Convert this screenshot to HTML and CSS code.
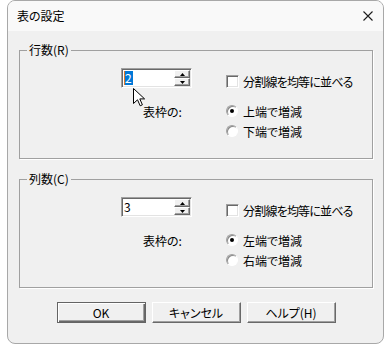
FILE: index.html
```html
<!DOCTYPE html>
<html lang="ja">
<head>
    <meta charset="UTF-8">
    <meta name="viewport" content="width=device-width, initial-scale=1.0">
    <title>表の設定</title>
    <link rel="stylesheet" href="styles.css">
</head>
<body>
    <div class="window">
        <div class="titlebar">
            <span class="title">表の設定</span>
            <svg class="close" width="10" height="10" viewBox="0 0 10 10">
                <path d="M0.5 0.5 L9.5 9.5 M9.5 0.5 L0.5 9.5" stroke="#1c1c1c" stroke-width="1.1" fill="none"/>
            </svg>
        </div>

        <div class="content">
            <!-- 行数 -->
            <fieldset class="group">
                <legend>行数(R)</legend>
                <div class="group-body">
                    <div class="col-left">
                        <div class="spin">
                            <div class="spin-value"><span class="selected">2</span></div>
                            <div class="spin-btns">
                                <div class="spin-btn"><svg width="5" height="3" viewBox="0 0 5 3"><path d="M2.5 0 L5 3 L0 3 Z" fill="#000"/></svg></div>
                                <div class="spin-btn"><svg width="5" height="3" viewBox="0 0 5 3"><path d="M0 0 L5 0 L2.5 3 Z" fill="#000"/></svg></div>
                            </div>
                        </div>
                        <div class="frame-label">表枠の:</div>
                    </div>
                    <div class="col-right">
                        <div class="option"><span class="checkbox"></span><span class="narrow">分割線を均等に並べる</span></div>
                        <div class="option first-radio"><span class="radio checked"></span>上端で増減</div>
                        <div class="option radio-row"><span class="radio"></span>下端で増減</div>
                    </div>
                </div>
            </fieldset>

            <!-- 列数 -->
            <fieldset class="group group-cols">
                <legend>列数(C)</legend>
                <div class="group-body">
                    <div class="col-left">
                        <div class="spin">
                            <div class="spin-value">3</div>
                            <div class="spin-btns">
                                <div class="spin-btn"><svg width="5" height="3" viewBox="0 0 5 3"><path d="M2.5 0 L5 3 L0 3 Z" fill="#000"/></svg></div>
                                <div class="spin-btn"><svg width="5" height="3" viewBox="0 0 5 3"><path d="M0 0 L5 0 L2.5 3 Z" fill="#000"/></svg></div>
                            </div>
                        </div>
                        <div class="frame-label">表枠の:</div>
                    </div>
                    <div class="col-right">
                        <div class="option"><span class="checkbox"></span><span class="narrow">分割線を均等に並べる</span></div>
                        <div class="option first-radio"><span class="radio checked"></span>左端で増減</div>
                        <div class="option radio-row"><span class="radio"></span>右端で増減</div>
                    </div>
                </div>
            </fieldset>

            <div class="buttons">
                <button class="btn default">OK</button>
                <button class="btn">キャンセル</button>
                <button class="btn">ヘルプ(H)</button>
            </div>
        </div>
    </div>

    <!-- mouse pointer -->
    <svg class="pointer" width="13" height="19" viewBox="0 0 13 19">
        <path d="M0.5 0.5 V15.5 L4.5 11.8 L7.2 17.8 L9.4 16.8 L6.8 10.9 H11.6 Z" fill="#fff" stroke="#000" stroke-width="1" stroke-linejoin="miter"/>
    </svg>
</body>
</html>
```

FILE: styles.css
```css
body {
    margin: 0;
    background: #fff;
    font-family: "Noto Sans CJK JP", "Noto Sans", sans-serif;
    font-size: 12px;
    color: #000;
    font-feature-settings: "palt";
}
.window {
    width: 377px;
    height: 344px;
    margin-left: 7px;
    box-sizing: border-box;
    border: 1px solid #a8a8a8;
    border-radius: 8px;
    background: #f0f0f0;
    overflow: hidden;
}
.titlebar {
    height: 30px;
    display: flex;
    align-items: center;
    justify-content: space-between;
    padding: 0 10px 0 9px;
    background: #f9f9f9;
}
.title {
    line-height: 16px;
}
.content {
    padding: 12px 10px 0 11px;
}
.group {
    margin: 0;
    padding: 0;
    border: 1px solid #a0a0a0;
    box-shadow: 1px 1px 0 #fff;
}
.group legend {
    margin-left: 7px;
    padding: 0 2px;
    line-height: 14px;
}
.group-cols {
    margin-top: 13px;
}
.group-body {
    display: flex;
    padding-bottom: 17px;
}
.col-left {
    width: 206px;
}
.col-right {
    padding-top: 14px;
}
.spin {
    display: flex;
    width: 71px;
    height: 20px;
    box-sizing: border-box;
    margin: 11px 0 0 101px;
    padding: 1px 1px 1px 1px;
    border: 1px solid;
    border-color: #a0a0a0 #fff #fff #a0a0a0;
    box-shadow: inset 1px 1px #696969, inset -1px -1px #e3e3e3;
    background: #fff;
}
.spin-value {
    flex: 1;
    padding-left: 1px;
    line-height: 14px;
    padding-top: 1px;
}
.selected {
    display: inline-block;
    background: #0078d7;
    color: #fff;
    border-left: 1px solid #e0782a;
    padding-right: 1px;
}
.spin-btns {
    display: flex;
    flex-direction: column;
    width: 16px;
}
.spin-btn {
    height: 8px;
    box-sizing: border-box;
    display: flex;
    align-items: center;
    justify-content: center;
    background: #f0f0f0;
    border: 1px solid;
    border-color: #fff #696969 #696969 #fff;
    box-shadow: inset -1px -1px #a0a0a0;
}
.spin-btn svg {
    display: block;
}
.frame-label {
    margin: 16px 0 0 123px;
    line-height: 16px;
}
.option {
    display: flex;
    align-items: center;
    height: 20px;
    gap: 5px;
}
.narrow {
    letter-spacing: -0.8px;
}
.first-radio {
    margin-top: 10px;
}
.checkbox {
    width: 13px;
    height: 13px;
    box-sizing: border-box;
    margin-right: -1px;
    border: 1px solid;
    border-color: #a0a0a0 #fff #fff #a0a0a0;
    box-shadow: inset 1px 1px #696969, inset -1px -1px #e3e3e3;
    background: #fff;
}
.radio {
    width: 12px;
    height: 12px;
    box-sizing: border-box;
    border-radius: 50%;
    border: 1px solid;
    border-color: #a0a0a0 #fff #fff #a0a0a0;
    box-shadow: inset 1px 1px #8a8a8a;
    background: #fff;
    display: flex;
    align-items: center;
    justify-content: center;
}
.radio.checked::after {
    content: "";
    width: 4px;
    height: 4px;
    border-radius: 50%;
    background: #000;
}
.buttons {
    display: flex;
    justify-content: center;
    gap: 6px;
    margin-top: 14px;
}
.btn {
    width: 89px;
    height: 21px;
    padding: 0;
    font: inherit;
    font-size: 12px;
    line-height: 14px;
    color: #000;
    background: #f0f0f0;
    border: 1px solid;
    border-color: #fff #696969 #696969 #fff;
    box-shadow: inset -1px -1px #a0a0a0;
    border-radius: 0;
}
.btn.default {
    border: 1px solid #646464;
    box-shadow: inset 1px 1px #fff, inset -1px -1px #696969, inset -2px -2px #a0a0a0;
}
.pointer {
    position: absolute;
    left: 133px;
    top: 88px;
}
```
